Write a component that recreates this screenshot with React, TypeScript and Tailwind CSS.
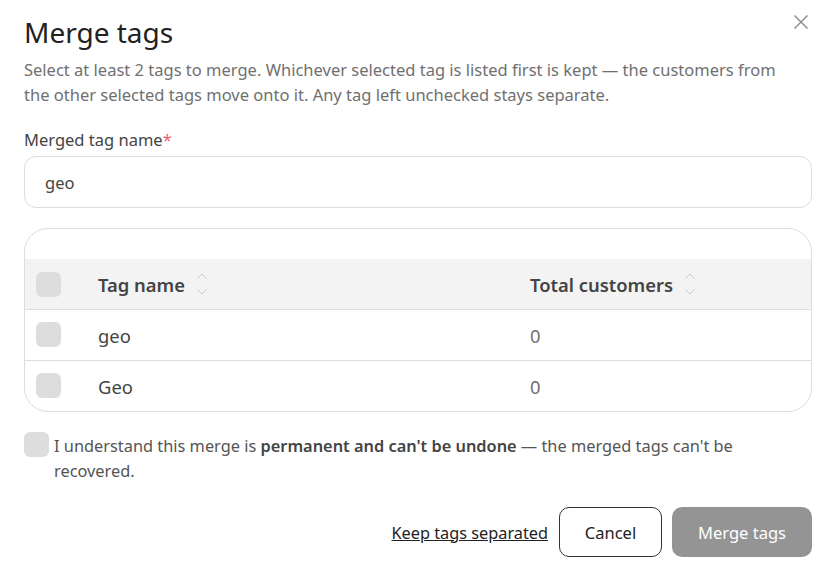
import React from 'react';

const font = { fontFamily: '"Noto Sans", sans-serif' };

function Box() {
  return <span className="block w-[25px] h-[25px] rounded-[6px] bg-[#dddddd] shrink-0" />;
}

function SortIcon() {
  return (
    <svg width="12" height="24" viewBox="0 0 12 24" fill="none" stroke="#c8c8c8" strokeWidth="1" className="ml-[11px]">
      <path d="M1.5 6.5L6 2L10.5 6.5" />
      <path d="M1.5 17.5L6 22L10.5 17.5" />
    </svg>
  );
}

const rows = ['geo', 'Geo'];

export default function App() {
  return (
    <div className="relative w-[833px] h-[572px] bg-white pl-6 pr-[21px] overflow-hidden" style={font}>
      <button className="absolute right-[24px] top-[14px] text-[#8f8f8f]">
        <svg width="16" height="16" viewBox="0 0 16 16" fill="none" stroke="currentColor" strokeWidth="1.5">
          <path d="M1.5 1.5L14.5 14.5M14.5 1.5L1.5 14.5" />
        </svg>
      </button>

      <h2 className="pt-[12px] text-[28px] leading-[40px] text-[#222222]">Merge tags</h2>
      <p className="mt-[5px] text-[16.5px] leading-[25px] text-[#707070]">
        Select at least 2 tags to merge. Whichever selected tag is listed first is kept — the customers from
        <br />
        the other selected tags move onto it. Any tag left unchecked stays separate.
      </p>

      <label className="block mt-[22px] text-[16.5px] leading-[22px] text-[#444444]">
        Merged tag name<span className="text-[#ee5f6b]">*</span>
      </label>
      <div className="mt-[5px] h-[52px] border border-[#dddddd] rounded-[12px] flex items-center px-5 pt-[2px] text-[16.5px] text-[#444444]">
        geo
      </div>

      <div className="mt-[20px] border border-[#dddddd] rounded-[24px] overflow-hidden pt-[30px]">
        <div className="flex items-center h-[51px] bg-[#f3f3f3] border-b border-[#dddddd] text-[18.4px] font-semibold text-[#444444]">
          <div className="w-[73px] pl-[11px]"><Box /></div>
          <div className="w-[432px] flex items-center pt-px">Tag name<SortIcon /></div>
          <div className="flex items-center pt-px">Total customers<SortIcon /></div>
        </div>
        {rows.map((r, i) => (
          <div key={r} className={`flex items-center text-[18.4px] text-[#444444] ${i === 0 ? 'h-[51px] border-b border-[#dddddd]' : 'h-[50px]'}`}>
            <div className="w-[73px] pl-[11px] pb-px"><Box /></div>
            <div className="w-[432px] pt-px">{r}</div>
            <div className="pt-px text-[#707070]">0</div>
          </div>
        ))}
      </div>

      <div className="mt-[20px] flex gap-[5px] text-[16.35px] leading-[25px] text-[#555555]">
        <Box />
        <p className="pt-[2px]">
          I understand this merge is <strong className="font-semibold text-[#444444]">permanent and can't be undone</strong> — the merged tags can't be
          <br />
          recovered.
        </p>
      </div>

      <div className="mt-[23px] flex items-center justify-end">
        <a className="underline pt-[2px] text-[16.3px] text-[#222222]">Keep tags separated</a>
        <button className="ml-[11px] w-[103px] h-[50px] rounded-[10px] border border-[#333333] pt-[2px] text-[16.5px] text-[#222222]">Cancel</button>
        <button className="ml-[10px] w-[140px] h-[50px] rounded-[10px] bg-[#949494] pt-[2px] text-[16.5px] text-white">Merge tags</button>
      </div>
    </div>
  );
}
